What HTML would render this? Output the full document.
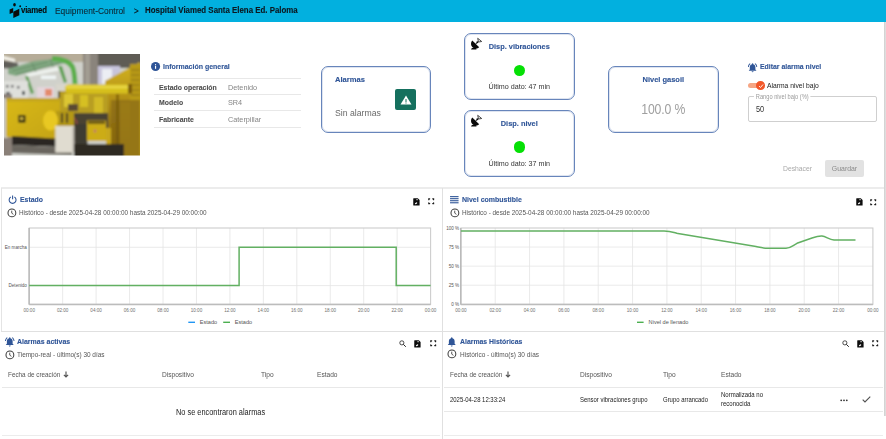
<!DOCTYPE html>
<html><head><meta charset="utf-8">
<style>
*{margin:0;padding:0;box-sizing:border-box}
html,body{width:886px;height:439px;overflow:hidden;background:#fff;font-family:"Liberation Sans",sans-serif;position:relative}
.a{position:absolute;white-space:nowrap;line-height:1}
.t{position:absolute;white-space:nowrap;line-height:10px;height:10px}
.blue{color:#2f5597}
.b{font-weight:bold;-webkit-text-stroke:0.12px currentColor}
.hl{position:absolute;height:1px;background:#e8e8e8}
.vl{position:absolute;width:1px;background:#e3e3e3}
.box{position:absolute;border:1px solid #6785bb;border-radius:7px;background:#fff;box-shadow:inset 0 0 0 1px rgba(103,133,187,0.22)}
svg{position:absolute;overflow:visible}
</style></head><body>

<!-- HEADER -->
<div class="a" style="left:0;top:0;width:886px;height:22px;background:#02b0df"></div>
<svg style="left:9px;top:3px" width="12" height="15" viewBox="0 0 12 15">
  <ellipse cx="5.5" cy="1.8" rx="1.35" ry="1.75" fill="#0a0a0a"/>
  <circle cx="11.2" cy="3.3" r="0.95" fill="#0a0a0a"/>
  <path d="M0.6 6.5 L4.2 5 L4.2 9.5 L0.6 10.9 Z" fill="#0a0a0a"/>
  <path d="M4.3 8.8 L10.3 5.8 L10.3 12.3 L4.3 14.9 Z" fill="#0a0a0a"/>
</svg>
<div class="t b" style="left:21.2px;top:6.15px;font-size:8.27px;letter-spacing:-0.2px;color:#0a0a0a;transform-origin:0 0;transform:scaleX(0.943)">viamed</div>
<div class="t" style="left:55px;top:5.80px;font-size:9.24px;color:#0e2835;-webkit-text-stroke:0.1px #0e2835;transform-origin:0 0;transform:scaleX(0.909)">Equipment-Control</div>
<div class="t" style="left:133.5px;top:5.80px;font-size:8.80px;color:#0a1a22;-webkit-text-stroke:0.25px #0a1a22;transform-origin:0 0;transform:scaleX(0.909)">&gt;</div>
<div class="t b" style="left:145px;top:5.35px;font-size:8.37px;color:#0c1820;transform-origin:0 0;transform:scaleX(0.943)">Hospital Viamed Santa Elena Ed. Paloma</div>

<!-- right scroll edge -->
<div class="a" style="left:884px;top:22px;width:2px;height:394px;background:linear-gradient(90deg,#cfcfcf,#e2e2e2)"></div>

<!-- PHOTO -->
<svg style="left:4px;top:54px" width="136" height="101.5" viewBox="0 0 136 101.5">
  <defs><filter id="bl" x="-10%" y="-10%" width="120%" height="120%"><feGaussianBlur stdDeviation="1.1"/></filter>
  <clipPath id="cp"><rect width="136" height="101.5"/></clipPath></defs>
  <g clip-path="url(#cp)"><g filter="url(#bl)">
  <rect x="-4" y="-4" width="144" height="110" fill="#d0d1cb"/>
  <rect x="-4" y="-4" width="100" height="12" fill="#b6ac98"/>
  <rect x="92" y="-4" width="48" height="18" fill="#5f5b55"/>
  <path d="M-4 1 L11 5 L11 8 L-4 4.5 Z" fill="#f6f4ec"/>
  <path d="M-4 6 L14 9 L14 15 L-4 14 Z" fill="#605e5a"/>
  <path d="M4 15 L30 7 L58 4 L62 9 L40 14 L12 22 L4 20 Z" fill="#82a882"/>
  <path d="M8 17 L44 8 M12 20 L56 9 M28 9 L32 18 M46 5 L49 13" stroke="#5e8460" stroke-width="0.8"/>
  <path d="M22 20 L54 13 L55 16.5 L23 23 Z" fill="#eef2ee"/>
  <rect x="37" y="21.5" width="15" height="3.5" fill="#f0f6f6"/>
  <path d="M21 22 L24 22 L30 39 L27 40 Z" fill="#62a056"/>
  <path d="M54 12 L58 12 L63 28 L60 29 Z" fill="#5ea052"/>
  <path d="M48 4.5 Q64 5 68.5 13 Q70.5 18 71 30" fill="none" stroke="#5cae4c" stroke-width="5"/>
  <rect x="-4" y="27" width="28" height="19" fill="#dfe0dc"/>
  <rect x="2" y="31" width="2.5" height="2.5" fill="#6a6a6c"/><rect x="7" y="31" width="2.5" height="2.5" fill="#6a6a6c"/><rect x="13" y="32" width="2.5" height="2.5" fill="#6a6a6c"/><rect x="2" y="38" width="4" height="3" fill="#505458"/><rect x="18" y="37" width="3" height="4" fill="#505458"/>
  <rect x="33" y="33" width="17" height="12" fill="#e4d6dc"/>
  <rect x="41" y="35" width="7" height="7" fill="#e48a6c"/>
  <rect x="52" y="30" width="14" height="16" fill="#d8d6cc"/>
  <rect x="79" y="-4" width="15" height="44" fill="#8a847b"/>
  <rect x="81" y="-4" width="5" height="44" fill="#a29c92"/>
  <rect x="94" y="12" width="22" height="20" fill="#c7c4dc"/>
  <rect x="98" y="15" width="10" height="15" fill="#eceef4"/>
  <defs><linearGradient id="rg" x1="0" y1="0" x2="0" y2="1"><stop offset="0" stop-color="#d4b41e"/><stop offset="0.4" stop-color="#b08e18"/><stop offset="1" stop-color="#6a500c"/></linearGradient></defs><path d="M101 27 L136 8 L136 106 L104 106 Z" fill="url(#rg)"/>
  <rect x="126" y="10" width="12" height="96" fill="#b89a18"/>
  <path d="M127 16 H136 M127 21 H136 M127 26 H136 M127 31 H136 M127 36 H136 M127 41 H136" stroke="#8a6e0c" stroke-width="1"/>
  <rect x="107" y="46" width="29" height="60" fill="#8a6a12" opacity="0.75"/><rect x="116" y="48" width="10" height="58" fill="#a08018" opacity="0.6"/>
  <rect x="112" y="40" width="3" height="66" fill="#6e540c" opacity="0.6"/>
  <rect x="54" y="37" width="50" height="50" fill="#4a4232"/>
  <rect x="56" y="37" width="48" height="22" fill="#b89e22"/>
  <rect x="60" y="40" width="9" height="13" fill="#dcc630"/>
  <rect x="76" y="41" width="8" height="12" fill="#d6c024"/>
  <rect x="90" y="43" width="9" height="16" fill="#d2ba26"/>
  <rect x="64" y="50" width="10" height="7" fill="#5a4a30"/>
  <path d="M66 60 L72 66 L75 80" stroke="#b04a50" stroke-width="1" fill="none"/>
  <rect x="61" y="30.5" width="67" height="9" rx="4" fill="#d6c01c"/>
  <rect x="62" y="31.5" width="64" height="3" fill="#e8d642"/>
  <rect x="124" y="30" width="4" height="9.5" fill="#7a5a10"/>
  <rect x="-4" y="40" width="12" height="66" fill="#8a8078"/>
  <rect x="-4" y="44" width="8" height="40" fill="#c8c8c4"/>
  <defs><linearGradient id="lg" x1="0" y1="0" x2="1" y2="1"><stop offset="0" stop-color="#d8b81a"/><stop offset="1" stop-color="#c4a414"/></linearGradient></defs>
  <path d="M2 44 L56 44 L56 86 L2 83 Z" fill="url(#lg)"/>
  <rect x="2" y="44" width="54" height="3.5" fill="#c4a61c"/>
  <rect x="14.4" y="61" width="7" height="7.5" fill="#141410"/>
  <rect x="16" y="63" width="3.5" height="3" fill="#c8b040"/>
  <rect x="52" y="57" width="18" height="15" fill="#b49818"/>
  <rect x="57" y="59" width="2" height="10" fill="#3a3220"/><rect x="62" y="59" width="2" height="10" fill="#3a3220"/>
  <ellipse cx="46.5" cy="66.5" rx="7.5" ry="10" fill="#e8c822"/>
  <path d="M8 82 L58 85 L58 93 L8 91 Z" fill="#2a2824"/>
  <path d="M8 91 L68 94 L68 101 L8 99 Z" fill="#6a665e"/>
  <rect x="51.3" y="72" width="19.2" height="26.6" fill="#e0dcd0"/>
  <rect x="68.5" y="73" width="2" height="25" fill="#b8b4aa"/>
  <rect x="70.5" y="70" width="13" height="20" fill="#3e3a30"/>
  <rect x="70" y="90" width="50" height="16" fill="#2e2a22"/>
  <rect x="83" y="66.5" width="19" height="20.5" fill="#ccac18"/>
  <rect x="84" y="67" width="17" height="3" fill="#6e5c14"/>
  <circle cx="91" cy="77" r="1.2" fill="#c06070"/>
  <rect x="102" y="74" width="5" height="16" fill="#c8a81a"/>
  </g></g>
</svg>

<!-- INFO GENERAL -->
<svg style="left:150.9px;top:62.4px" width="9.1" height="9.1" viewBox="0 0 24 24"><circle cx="12" cy="12" r="12" fill="#2f5597"/><rect x="10.5" y="10" width="3" height="8" fill="#fff"/><circle cx="12" cy="6.8" r="1.7" fill="#fff"/></svg>
<div class="t b blue" style="left:162.8px;top:61.85px;font-size:7.42px;transform-origin:0 0;transform:scaleX(0.943)">Información general</div>
<div class="hl" style="left:153.5px;top:78px;width:147px"></div>
<div class="hl" style="left:153.5px;top:94px;width:147px"></div>
<div class="hl" style="left:153.5px;top:110px;width:147px"></div>
<div class="hl" style="left:153.5px;top:127px;width:147px"></div>
<div class="t b" style="left:159px;top:82.50px;font-size:7.31px;color:#505050;transform-origin:0 0;transform:scaleX(0.943)">Estado operación</div>
<div class="t" style="left:227.7px;top:82.50px;font-size:8.03px;color:#858585;transform-origin:0 0;transform:scaleX(0.909)">Detenido</div>
<div class="t b" style="left:159px;top:98.40px;font-size:7.31px;color:#505050;transform-origin:0 0;transform:scaleX(0.943)">Modelo</div>
<div class="t" style="left:227.7px;top:98.40px;font-size:8.03px;color:#858585;transform-origin:0 0;transform:scaleX(0.909)">SR4</div>
<div class="t b" style="left:159px;top:114.60px;font-size:7.31px;color:#505050;transform-origin:0 0;transform:scaleX(0.943)">Fabricante</div>
<div class="t" style="left:227.7px;top:114.60px;font-size:8.03px;color:#858585;transform-origin:0 0;transform:scaleX(0.909)">Caterpillar</div>

<!-- ALARMAS BOX -->
<div class="box" style="left:321px;top:66px;width:110px;height:67px"></div>
<div class="t b blue" style="left:334.8px;top:74.85px;font-size:8.06px;transform-origin:0 0;transform:scaleX(0.943)">Alarmas</div>
<div class="a" style="left:395px;top:89px;width:21px;height:21px;background:#15705e;border-radius:2px"></div>
<svg style="left:399.5px;top:93.5px" width="12" height="12" viewBox="0 0 24 24"><path d="M12 3 L23 21 L1 21 Z" fill="#fff"/><rect x="11" y="10" width="2" height="6" fill="#15705e"/><rect x="11" y="17" width="2" height="2" fill="#15705e"/></svg>
<div class="t" style="left:334.8px;top:107.90px;font-size:9.57px;color:#6a6a6a;transform-origin:0 0;transform:scaleX(0.909)">Sin alarmas</div>

<!-- DISP VIBRACIONES -->
<div class="box" style="left:464.3px;top:33px;width:110.5px;height:67px"></div>
<svg style="left:468px;top:35px" width="18" height="17" viewBox="0 0 18 17"><path d="M4.3 5.6 A4.6 4.6 0 0 0 11.2 12.2 Z" fill="#0a0a0a"/><line x1="7.7" y1="9" x2="9.4" y2="7.3" stroke="#0a0a0a" stroke-width="1"/><circle cx="9.4" cy="7.3" r="1" fill="#0a0a0a"/><path d="M9.7 3.3 L13.7 6.5 L10.5 7 Z" fill="none" stroke="#333" stroke-width="0.9"/><path d="M3 14.6 L3.9 12.9 L7.8 13.1 L8.6 14.6 Z" fill="#0a0a0a"/></svg>
<div class="t b blue" style="left:464.3px;width:110.5px;text-align:center;top:41.85px;font-size:7.84px;transform-origin:50% 0;transform:scaleX(0.943)">Disp. vibraciones</div>
<div class="a" style="left:514px;top:64.5px;width:11.2px;height:11.2px;border-radius:50%;background:#05e005"></div>
<div class="t" style="left:464.3px;width:110.5px;text-align:center;top:81.90px;font-size:7.87px;color:#333;transform-origin:50% 0;transform:scaleX(0.909)">Último dato: 47 min</div>

<!-- DISP NIVEL -->
<div class="box" style="left:464.3px;top:110.4px;width:110.5px;height:66.6px"></div>
<svg style="left:468px;top:112.4px" width="18" height="17" viewBox="0 0 18 17"><path d="M4.3 5.6 A4.6 4.6 0 0 0 11.2 12.2 Z" fill="#0a0a0a"/><line x1="7.7" y1="9" x2="9.4" y2="7.3" stroke="#0a0a0a" stroke-width="1"/><circle cx="9.4" cy="7.3" r="1" fill="#0a0a0a"/><path d="M9.7 3.3 L13.7 6.5 L10.5 7 Z" fill="none" stroke="#333" stroke-width="0.9"/><path d="M3 14.6 L3.9 12.9 L7.8 13.1 L8.6 14.6 Z" fill="#0a0a0a"/></svg>
<div class="t b blue" style="left:464.3px;width:110.5px;text-align:center;top:119.15px;font-size:7.84px;transform-origin:50% 0;transform:scaleX(0.943)">Disp. nivel</div>
<div class="a" style="left:514px;top:141.4px;width:11.2px;height:11.2px;border-radius:50%;background:#05e005"></div>
<div class="t" style="left:464.3px;width:110.5px;text-align:center;top:158.60px;font-size:7.87px;color:#333;transform-origin:50% 0;transform:scaleX(0.909)">Último dato: 37 min</div>

<!-- NIVEL GASOIL -->
<div class="box" style="left:608px;top:65.9px;width:110.6px;height:67.1px"></div>
<div class="t b blue" style="left:608px;width:110.6px;text-align:center;top:75.05px;font-size:7.95px;transform-origin:50% 0;transform:scaleX(0.943)">Nivel gasoil</div>
<div class="t" style="left:608px;width:110.6px;text-align:center;top:102.9px;font-size:13.8px;line-height:14px;height:14px;color:#a0a0a0;transform:scaleX(0.885);letter-spacing:-0.1px">100.0 %</div>

<!-- EDITAR ALARMA -->
<svg style="left:746.8px;top:61.5px" width="11.2" height="11.2" viewBox="0 0 24 24"><path fill="#2f5597" d="M7.58 4.08L6.15 2.65C3.75 4.48 2.17 7.3 2.03 10.5h2c.15-2.65 1.51-4.97 3.55-6.42zm12.39 6.42h2c-.15-3.2-1.73-6.02-4.12-7.85l-1.42 1.43c2.02 1.45 3.39 3.77 3.54 6.42zM18 11c0-3.07-1.64-5.64-4.5-6.32V4c0-.83-.67-1.5-1.5-1.5s-1.5.67-1.5 1.5v.68C7.63 5.36 6 7.92 6 11v5l-2 2v1h16v-1l-2-2v-5zm-6 11c.14 0 .27-.01.4-.04.65-.14 1.18-.58 1.44-1.18.1-.24.15-.5.15-.78h-4c.01 1.1.9 2 2.01 2z"/></svg>
<div class="t b blue" style="left:760px;top:62.35px;font-size:7.31px;transform-origin:0 0;transform:scaleX(0.943)">Editar alarma nivel</div>
<div class="a" style="left:748.2px;top:83.2px;width:14.5px;height:5.2px;border-radius:3px;background:#f6a684"></div>
<div class="a" style="left:756.2px;top:81.4px;width:8.6px;height:8.6px;border-radius:50%;background:#f2582a"></div>
<svg style="left:757.5px;top:83px" width="6" height="6" viewBox="0 0 12 12"><path d="M2 6 L5 9 L10 3" stroke="#fff" stroke-width="1.8" fill="none"/></svg>
<div class="t" style="left:766.5px;top:81.40px;font-size:7.43px;color:#222;transform-origin:0 0;transform:scaleX(0.909)">Alarma nivel bajo</div>
<div class="a" style="left:748.2px;top:96.3px;width:128.4px;height:25.3px;border:1px solid #cfcfcf;border-radius:2px"></div>
<div class="t" style="left:753.7px;top:91.80px;font-size:6.27px;color:#9a9a9a;background:#fff;padding:0 2px;line-height:9px;height:9px;transform-origin:0 0;transform:scaleX(0.909)">Rango nivel bajo (%)</div>
<div class="t" style="left:755.7px;top:105.30px;font-size:8.14px;color:#333;transform-origin:0 0;transform:scaleX(0.909)">50</div>
<div class="t" style="left:782.8px;top:163.90px;font-size:7.48px;color:#a9a9a9;transform-origin:0 0;transform:scaleX(0.909)">Deshacer</div>
<div class="a" style="left:825px;top:160px;width:39px;height:16.5px;background:#e2e2e2;border-radius:2px"></div>
<div class="t" style="left:825px;width:39px;text-align:center;top:164.10px;font-size:7.59px;color:#8a8a8a;transform-origin:50% 0;transform:scaleX(0.909)">Guardar</div>

<!-- CARD GRID -->
<div class="hl" style="left:1px;top:187px;width:883px;height:2px;background:#ececec"></div>
<div class="vl" style="left:1px;top:188px;height:143px;background:#e4e4e4"></div>
<div class="vl" style="left:442px;top:188px;height:251px;background:#e0e0e0"></div>
<div class="hl" style="left:1px;top:331px;width:883px;background:#e0e0e0"></div>

<!-- CHART 1 -->
<svg style="left:0;top:0" width="886" height="439" viewBox="0 0 886 439">
<line x1="62.65" y1="228.0" x2="62.65" y2="304.3" stroke="#e4e4e4" stroke-width="0.8"/>
<line x1="96.10" y1="228.0" x2="96.10" y2="304.3" stroke="#e4e4e4" stroke-width="0.8"/>
<line x1="129.55" y1="228.0" x2="129.55" y2="304.3" stroke="#e4e4e4" stroke-width="0.8"/>
<line x1="163.00" y1="228.0" x2="163.00" y2="304.3" stroke="#e4e4e4" stroke-width="0.8"/>
<line x1="196.45" y1="228.0" x2="196.45" y2="304.3" stroke="#e4e4e4" stroke-width="0.8"/>
<line x1="229.90" y1="228.0" x2="229.90" y2="304.3" stroke="#e4e4e4" stroke-width="0.8"/>
<line x1="263.35" y1="228.0" x2="263.35" y2="304.3" stroke="#e4e4e4" stroke-width="0.8"/>
<line x1="296.80" y1="228.0" x2="296.80" y2="304.3" stroke="#e4e4e4" stroke-width="0.8"/>
<line x1="330.25" y1="228.0" x2="330.25" y2="304.3" stroke="#e4e4e4" stroke-width="0.8"/>
<line x1="363.70" y1="228.0" x2="363.70" y2="304.3" stroke="#e4e4e4" stroke-width="0.8"/>
<line x1="397.15" y1="228.0" x2="397.15" y2="304.3" stroke="#e4e4e4" stroke-width="0.8"/>
<line x1="29.2" y1="247.3" x2="430.6" y2="247.3" stroke="#e4e4e4" stroke-width="0.8"/>
<line x1="29.2" y1="285.6" x2="430.6" y2="285.6" stroke="#e4e4e4" stroke-width="0.8"/>
<rect x="29.2" y="228.0" width="401.40" height="76.30" fill="none" stroke="#cdcdcd" stroke-width="1.1"/>
<line x1="29.1" y1="228.0" x2="29.1" y2="304.6" stroke="#b4b4b4" stroke-width="1.3"/>
<line x1="29.1" y1="304.6" x2="430.6" y2="304.6" stroke="#bcbcbc" stroke-width="1.5"/>
<path d="M29.2 285.6 H239.1 V247.3 H396.2 V285.6 H430.6" fill="none" stroke="#62b062" stroke-width="1.5"/>
<text x="29.20" y="311.9" font-size="4.6" fill="#707070" text-anchor="middle">00:00</text>
<text x="62.65" y="311.9" font-size="4.6" fill="#707070" text-anchor="middle">02:00</text>
<text x="96.10" y="311.9" font-size="4.6" fill="#707070" text-anchor="middle">04:00</text>
<text x="129.55" y="311.9" font-size="4.6" fill="#707070" text-anchor="middle">06:00</text>
<text x="163.00" y="311.9" font-size="4.6" fill="#707070" text-anchor="middle">08:00</text>
<text x="196.45" y="311.9" font-size="4.6" fill="#707070" text-anchor="middle">10:00</text>
<text x="229.90" y="311.9" font-size="4.6" fill="#707070" text-anchor="middle">12:00</text>
<text x="263.35" y="311.9" font-size="4.6" fill="#707070" text-anchor="middle">14:00</text>
<text x="296.80" y="311.9" font-size="4.6" fill="#707070" text-anchor="middle">16:00</text>
<text x="330.25" y="311.9" font-size="4.6" fill="#707070" text-anchor="middle">18:00</text>
<text x="363.70" y="311.9" font-size="4.6" fill="#707070" text-anchor="middle">20:00</text>
<text x="397.15" y="311.9" font-size="4.6" fill="#707070" text-anchor="middle">22:00</text>
<text x="430.60" y="311.9" font-size="4.6" fill="#707070" text-anchor="middle">00:00</text>
<text x="26.9" y="249" font-size="4.6" fill="#555" text-anchor="end">En marcha</text>
<text x="26.9" y="287.3" font-size="4.6" fill="#555" text-anchor="end">Detenido</text>
<!-- CHART 2 -->
<line x1="495.23" y1="228.0" x2="495.23" y2="304.3" stroke="#e4e4e4" stroke-width="0.8"/>
<line x1="529.57" y1="228.0" x2="529.57" y2="304.3" stroke="#e4e4e4" stroke-width="0.8"/>
<line x1="563.90" y1="228.0" x2="563.90" y2="304.3" stroke="#e4e4e4" stroke-width="0.8"/>
<line x1="598.23" y1="228.0" x2="598.23" y2="304.3" stroke="#e4e4e4" stroke-width="0.8"/>
<line x1="632.57" y1="228.0" x2="632.57" y2="304.3" stroke="#e4e4e4" stroke-width="0.8"/>
<line x1="666.90" y1="228.0" x2="666.90" y2="304.3" stroke="#e4e4e4" stroke-width="0.8"/>
<line x1="701.23" y1="228.0" x2="701.23" y2="304.3" stroke="#e4e4e4" stroke-width="0.8"/>
<line x1="735.57" y1="228.0" x2="735.57" y2="304.3" stroke="#e4e4e4" stroke-width="0.8"/>
<line x1="769.90" y1="228.0" x2="769.90" y2="304.3" stroke="#e4e4e4" stroke-width="0.8"/>
<line x1="804.23" y1="228.0" x2="804.23" y2="304.3" stroke="#e4e4e4" stroke-width="0.8"/>
<line x1="838.57" y1="228.0" x2="838.57" y2="304.3" stroke="#e4e4e4" stroke-width="0.8"/>
<line x1="460.9" y1="285.23" x2="872.9" y2="285.23" stroke="#e4e4e4" stroke-width="0.8"/>
<line x1="460.9" y1="266.15" x2="872.9" y2="266.15" stroke="#e4e4e4" stroke-width="0.8"/>
<line x1="460.9" y1="247.07" x2="872.9" y2="247.07" stroke="#e4e4e4" stroke-width="0.8"/>
<rect x="460.9" y="228.0" width="412.00" height="76.30" fill="none" stroke="#cdcdcd" stroke-width="1.1"/>
<line x1="460.8" y1="228.0" x2="460.8" y2="304.6" stroke="#b4b4b4" stroke-width="1.3"/>
<line x1="460.8" y1="304.6" x2="872.9" y2="304.6" stroke="#bcbcbc" stroke-width="1.5"/>
<text x="460.90" y="311.9" font-size="4.6" fill="#707070" text-anchor="middle">00:00</text>
<text x="495.23" y="311.9" font-size="4.6" fill="#707070" text-anchor="middle">02:00</text>
<text x="529.57" y="311.9" font-size="4.6" fill="#707070" text-anchor="middle">04:00</text>
<text x="563.90" y="311.9" font-size="4.6" fill="#707070" text-anchor="middle">06:00</text>
<text x="598.23" y="311.9" font-size="4.6" fill="#707070" text-anchor="middle">08:00</text>
<text x="632.57" y="311.9" font-size="4.6" fill="#707070" text-anchor="middle">10:00</text>
<text x="666.90" y="311.9" font-size="4.6" fill="#707070" text-anchor="middle">12:00</text>
<text x="701.23" y="311.9" font-size="4.6" fill="#707070" text-anchor="middle">14:00</text>
<text x="735.57" y="311.9" font-size="4.6" fill="#707070" text-anchor="middle">16:00</text>
<text x="769.90" y="311.9" font-size="4.6" fill="#707070" text-anchor="middle">18:00</text>
<text x="804.23" y="311.9" font-size="4.6" fill="#707070" text-anchor="middle">20:00</text>
<text x="838.57" y="311.9" font-size="4.6" fill="#707070" text-anchor="middle">22:00</text>
<text x="872.90" y="311.9" font-size="4.6" fill="#707070" text-anchor="middle">00:00</text>
<text x="459.2" y="229.60" font-size="4.6" fill="#555" text-anchor="end">100 %</text>
<text x="459.2" y="248.67" font-size="4.6" fill="#555" text-anchor="end">75 %</text>
<text x="459.2" y="267.75" font-size="4.6" fill="#555" text-anchor="end">50 %</text>
<text x="459.2" y="286.83" font-size="4.6" fill="#555" text-anchor="end">25 %</text>
<text x="459.2" y="305.90" font-size="4.6" fill="#555" text-anchor="end">0 %</text>
<path d="M460.9 231.1 L664 231.1 C670 231.1 672 232 678 233.6 L756 246.6 C760 247.4 763 248.3 768 248.3 L786 248.3 C790 248.3 792 246 797 243.3 L812 238 C816 236.6 819 235.8 822 236 C826 236.4 829 239.5 834 240 L855.5 240" fill="none" stroke="#62b062" stroke-width="1.5"/>
<line x1="188.3" y1="322.3" x2="195" y2="322.3" stroke="#2196f3" stroke-width="1.4"/>
<line x1="223.2" y1="322.3" x2="230" y2="322.3" stroke="#4caf50" stroke-width="1.4"/>
<line x1="637" y1="322.3" x2="643.6" y2="322.3" stroke="#4caf50" stroke-width="1.4"/>
<text x="199.7" y="324.3" font-size="5.6" fill="#555">Estado</text>
<text x="234.7" y="324.3" font-size="5.6" fill="#555">Estado</text>
<text x="648.6" y="324.3" font-size="5.6" fill="#555">Nivel de llenado</text>
</svg>
<!-- ROW2 LEFT -->
<svg style="left:7.6px;top:195.3px" width="9.2" height="9.2" viewBox="0 0 24 24"><path d="M7.2 5.2 A9 9 0 1 0 16.8 5.2" fill="none" stroke="#2f5597" stroke-width="2.8"/><line x1="12" y1="1.5" x2="12" y2="11" stroke="#2f5597" stroke-width="2.8"/></svg>
<div class="t b blue" style="left:19.7px;top:194.95px;font-size:7.31px;transform-origin:0 0;transform:scaleX(0.943)">Estado</div>
<svg style="left:7.0px;top:207.7px" width="9.8" height="9.8" viewBox="0 0 24 24"><circle cx="12" cy="12" r="9.6" fill="none" stroke="#3a3a3a" stroke-width="2.5"/><path d="M11.6 6.5 V12.6 L15.8 15.6" fill="none" stroke="#3a3a3a" stroke-width="2.1"/></svg>
<div class="t" style="left:19.3px;top:208.00px;font-size:7.04px;color:#555;transform-origin:0 0;transform:scaleX(0.909)">Histórico - desde 2025-04-28 00:00:00 hasta 2025-04-29 00:00:00</div>
<svg style="left:413.2px;top:198px" width="7" height="7.6" viewBox="0 0 14 15.2"><path d="M1.5 0.3 H9.5 L13.2 4 V14 Q13.2 15 12.2 15 H1.5 Q0.5 15 0.5 14 V1.3 Q0.5 0.3 1.5 0.3 Z" fill="#0d0d0d"/><circle cx="8.1" cy="3.4" r="1.3" fill="#fff"/><path d="M3.6 12.2 Q4 9.6 7.2 8.6 Q8.6 9 8.4 10.4 Q6.2 12.6 3.6 12.2 Z" fill="#fff"/></svg>
<svg style="left:428px;top:198.3px" width="6.4" height="6.4" viewBox="0 0 13 13" fill="none" stroke="#1a1a1a" stroke-width="2.4" stroke-linecap="round"><path d="M1.6 3.4 L1.6 1.6 L3.4 1.6"/><path d="M9.6 1.6 L11.4 1.6 L11.4 3.4"/><path d="M11.4 9.6 L11.4 11.4 L9.6 11.4"/><path d="M3.4 11.4 L1.6 11.4 L1.6 9.6"/></svg>
<!-- ROW2 RIGHT -->
<svg style="left:450px;top:196.2px" width="8.6" height="7.6" viewBox="0 0 18 16"><rect x="0" y="0.2" width="18" height="2.3" fill="#2f5597"/><rect x="0" y="4.5" width="18" height="2.3" fill="#2f5597"/><rect x="0" y="8.8" width="18" height="2.3" fill="#2f5597"/><rect x="0" y="13.1" width="18" height="2.3" fill="#2f5597"/></svg>
<div class="t b blue" style="left:461.5px;top:195.05px;font-size:7.42px;transform-origin:0 0;transform:scaleX(0.943)">Nivel combustible</div>
<svg style="left:449.6px;top:207.8px" width="9.8" height="9.8" viewBox="0 0 24 24"><circle cx="12" cy="12" r="9.6" fill="none" stroke="#3a3a3a" stroke-width="2.5"/><path d="M11.6 6.5 V12.6 L15.8 15.6" fill="none" stroke="#3a3a3a" stroke-width="2.1"/></svg>
<div class="t" style="left:461.6px;top:208.10px;font-size:7.04px;color:#555;transform-origin:0 0;transform:scaleX(0.909)">Histórico - desde 2025-04-28 00:00:00 hasta 2025-04-29 00:00:00</div>
<svg style="left:855.7px;top:198px" width="7" height="7.6" viewBox="0 0 14 15.2"><path d="M1.5 0.3 H9.5 L13.2 4 V14 Q13.2 15 12.2 15 H1.5 Q0.5 15 0.5 14 V1.3 Q0.5 0.3 1.5 0.3 Z" fill="#0d0d0d"/><circle cx="8.1" cy="3.4" r="1.3" fill="#fff"/><path d="M3.6 12.2 Q4 9.6 7.2 8.6 Q8.6 9 8.4 10.4 Q6.2 12.6 3.6 12.2 Z" fill="#fff"/></svg>
<svg style="left:870.3px;top:198.6px" width="6.4" height="6.4" viewBox="0 0 13 13" fill="none" stroke="#1a1a1a" stroke-width="2.4" stroke-linecap="round"><path d="M1.6 3.4 L1.6 1.6 L3.4 1.6"/><path d="M9.6 1.6 L11.4 1.6 L11.4 3.4"/><path d="M11.4 9.6 L11.4 11.4 L9.6 11.4"/><path d="M3.4 11.4 L1.6 11.4 L1.6 9.6"/></svg>
<!-- ROW3 LEFT -->
<svg style="left:4.15px;top:335.9px" width="11.5" height="11.5" viewBox="0 0 24 24"><path fill="#2f5597" d="M7.58 4.08L6.15 2.65C3.75 4.48 2.17 7.3 2.03 10.5h2c.15-2.65 1.51-4.97 3.55-6.42zm12.39 6.42h2c-.15-3.2-1.73-6.02-4.12-7.85l-1.42 1.43c2.02 1.45 3.39 3.77 3.54 6.42zM18 11c0-3.07-1.64-5.64-4.5-6.32V4c0-.83-.67-1.5-1.5-1.5s-1.5.67-1.5 1.5v.68C7.63 5.36 6 7.92 6 11v5l-2 2v1h16v-1l-2-2v-5zm-6 11c.14 0 .27-.01.4-.04.65-.14 1.18-.58 1.44-1.18.1-.24.15-.5.15-.78h-4c.01 1.1.9 2 2.01 2z"/></svg>
<div class="t b blue" style="left:17.1px;top:336.55px;font-size:7.42px;transform-origin:0 0;transform:scaleX(0.943)">Alarmas activas</div>
<svg style="left:4.7px;top:349.5px" width="9.8" height="9.8" viewBox="0 0 24 24"><circle cx="12" cy="12" r="9.6" fill="none" stroke="#3a3a3a" stroke-width="2.5"/><path d="M11.6 6.5 V12.6 L15.8 15.6" fill="none" stroke="#3a3a3a" stroke-width="2.1"/></svg>
<div class="t" style="left:17.4px;top:350.10px;font-size:7.10px;color:#555;transform-origin:0 0;transform:scaleX(0.909)">Tiempo-real - último(s) 30 días</div>
<svg style="left:399.2px;top:339.5px" width="7.4" height="7.4" viewBox="0 0 15 15"><circle cx="5.8" cy="5.8" r="4.2" fill="none" stroke="#1f1f1f" stroke-width="1.6"/><path d="M8.9 8.9 L13.8 13.8" stroke="#1f1f1f" stroke-width="2"/></svg>
<svg style="left:414.4px;top:339.6px" width="7" height="7.6" viewBox="0 0 14 15.2"><path d="M1.5 0.3 H9.5 L13.2 4 V14 Q13.2 15 12.2 15 H1.5 Q0.5 15 0.5 14 V1.3 Q0.5 0.3 1.5 0.3 Z" fill="#0d0d0d"/><circle cx="8.1" cy="3.4" r="1.3" fill="#fff"/><path d="M3.6 12.2 Q4 9.6 7.2 8.6 Q8.6 9 8.4 10.4 Q6.2 12.6 3.6 12.2 Z" fill="#fff"/></svg>
<svg style="left:429.5px;top:340.2px" width="6.4" height="6.4" viewBox="0 0 13 13" fill="none" stroke="#1a1a1a" stroke-width="2.4" stroke-linecap="round"><path d="M1.6 3.4 L1.6 1.6 L3.4 1.6"/><path d="M9.6 1.6 L11.4 1.6 L11.4 3.4"/><path d="M11.4 9.6 L11.4 11.4 L9.6 11.4"/><path d="M3.4 11.4 L1.6 11.4 L1.6 9.6"/></svg>
<div class="t" style="left:7.7px;top:369.80px;font-size:6.99px;color:#555;transform-origin:0 0;transform:scaleX(0.909)">Fecha de creación</div>
<svg style="left:62.8px;top:371.2px" width="6" height="7" viewBox="0 0 12 14"><path d="M6 1 V12 M1.8 7.6 L6 12 L10.2 7.6" fill="none" stroke="#555" stroke-width="2.3"/></svg>
<div class="t" style="left:162.2px;top:369.80px;font-size:7.26px;color:#555;transform-origin:0 0;transform:scaleX(0.909)">Dispositivo</div>
<div class="t" style="left:261px;top:369.80px;font-size:7.26px;color:#555;transform-origin:0 0;transform:scaleX(0.909)">Tipo</div>
<div class="t" style="left:317.2px;top:369.80px;font-size:7.26px;color:#555;transform-origin:0 0;transform:scaleX(0.909)">Estado</div>
<div class="hl" style="left:2px;top:387px;width:438px"></div>
<div class="t" style="left:176.3px;top:408.40px;font-size:8.14px;color:#222;transform-origin:0 0;transform:scaleX(0.909)">No se encontraron alarmas</div>
<div class="hl" style="left:2px;top:435.3px;width:438px;background:#ececec"></div>
<!-- ROW3 RIGHT -->
<svg style="left:446.3px;top:335.6px" width="11.5" height="11.5" viewBox="0 0 24 24"><path fill="#2f5597" d="M12 22c1.1 0 2-.9 2-2h-4c0 1.1.89 2 2 2zm6-6v-5c0-3.07-1.64-5.64-4.5-6.32V4c0-.83-.67-1.5-1.5-1.5s-1.5.67-1.5 1.5v.68C7.63 5.36 6 7.92 6 11v5l-2 2v1h16v-1l-2-2z"/></svg>
<div class="t b blue" style="left:459.9px;top:336.65px;font-size:7.31px;transform-origin:0 0;transform:scaleX(0.943)">Alarmas Históricas</div>
<svg style="left:447.1px;top:349.4px" width="9.8" height="9.8" viewBox="0 0 24 24"><circle cx="12" cy="12" r="9.6" fill="none" stroke="#3a3a3a" stroke-width="2.5"/><path d="M11.6 6.5 V12.6 L15.8 15.6" fill="none" stroke="#3a3a3a" stroke-width="2.1"/></svg>
<div class="t" style="left:459.9px;top:350.00px;font-size:7.15px;color:#555;transform-origin:0 0;transform:scaleX(0.909)">Histórico - último(s) 30 días</div>
<svg style="left:842px;top:339.5px" width="7.4" height="7.4" viewBox="0 0 15 15"><circle cx="5.8" cy="5.8" r="4.2" fill="none" stroke="#1f1f1f" stroke-width="1.6"/><path d="M8.9 8.9 L13.8 13.8" stroke="#1f1f1f" stroke-width="2"/></svg>
<svg style="left:857.3px;top:339.5px" width="7" height="7.6" viewBox="0 0 14 15.2"><path d="M1.5 0.3 H9.5 L13.2 4 V14 Q13.2 15 12.2 15 H1.5 Q0.5 15 0.5 14 V1.3 Q0.5 0.3 1.5 0.3 Z" fill="#0d0d0d"/><circle cx="8.1" cy="3.4" r="1.3" fill="#fff"/><path d="M3.6 12.2 Q4 9.6 7.2 8.6 Q8.6 9 8.4 10.4 Q6.2 12.6 3.6 12.2 Z" fill="#fff"/></svg>
<svg style="left:872.3px;top:340.2px" width="6.4" height="6.4" viewBox="0 0 13 13" fill="none" stroke="#1a1a1a" stroke-width="2.4" stroke-linecap="round"><path d="M1.6 3.4 L1.6 1.6 L3.4 1.6"/><path d="M9.6 1.6 L11.4 1.6 L11.4 3.4"/><path d="M11.4 9.6 L11.4 11.4 L9.6 11.4"/><path d="M3.4 11.4 L1.6 11.4 L1.6 9.6"/></svg>
<div class="t" style="left:449.8px;top:369.60px;font-size:6.99px;color:#555;transform-origin:0 0;transform:scaleX(0.909)">Fecha de creación</div>
<svg style="left:505px;top:371px" width="6" height="7" viewBox="0 0 12 14"><path d="M6 1 V12 M1.8 7.6 L6 12 L10.2 7.6" fill="none" stroke="#555" stroke-width="2.3"/></svg>
<div class="t" style="left:579.5px;top:369.60px;font-size:7.26px;color:#555;transform-origin:0 0;transform:scaleX(0.909)">Dispositivo</div>
<div class="t" style="left:663px;top:369.60px;font-size:7.26px;color:#555;transform-origin:0 0;transform:scaleX(0.909)">Tipo</div>
<div class="t" style="left:721.3px;top:369.60px;font-size:7.26px;color:#555;transform-origin:0 0;transform:scaleX(0.909)">Estado</div>
<div class="hl" style="left:444px;top:387px;width:438.5px"></div>
<div class="t" style="left:449.8px;top:394.80px;font-size:6.55px;color:#222;transform-origin:0 0;transform:scaleX(0.909)">2025-04-28 12:33:24</div>
<div class="t" style="left:579.5px;top:394.80px;font-size:6.55px;color:#222;transform-origin:0 0;transform:scaleX(0.909)">Sensor vibraciones grupo</div>
<div class="t" style="left:663px;top:394.80px;font-size:6.55px;color:#222;transform-origin:0 0;transform:scaleX(0.909)">Grupo arrancado</div>
<div class="t" style="left:721.3px;top:390.40px;font-size:6.60px;color:#222;transform-origin:0 0;transform:scaleX(0.909)">Normalizada no</div>
<div class="t" style="left:721.3px;top:399.00px;font-size:6.60px;color:#222;transform-origin:0 0;transform:scaleX(0.909)">reconocida</div>
<svg style="left:840px;top:399px" width="8" height="3" viewBox="0 0 8 3"><circle cx="1.2" cy="1.3" r="0.9" fill="#333"/><circle cx="4" cy="1.3" r="0.9" fill="#333"/><circle cx="6.8" cy="1.3" r="0.9" fill="#333"/></svg>
<svg style="left:861.6px;top:396.4px" width="8.6" height="6.6" viewBox="0 0 13 10"><path d="M1 5.5 L4.5 9 L12.5 1" fill="none" stroke="#505050" stroke-width="1.7"/></svg>
<div class="hl" style="left:444px;top:411px;width:438.5px"></div>
<div class="hl" style="left:444px;top:434.7px;width:438.5px;background:#ececec"></div>
</body></html>
